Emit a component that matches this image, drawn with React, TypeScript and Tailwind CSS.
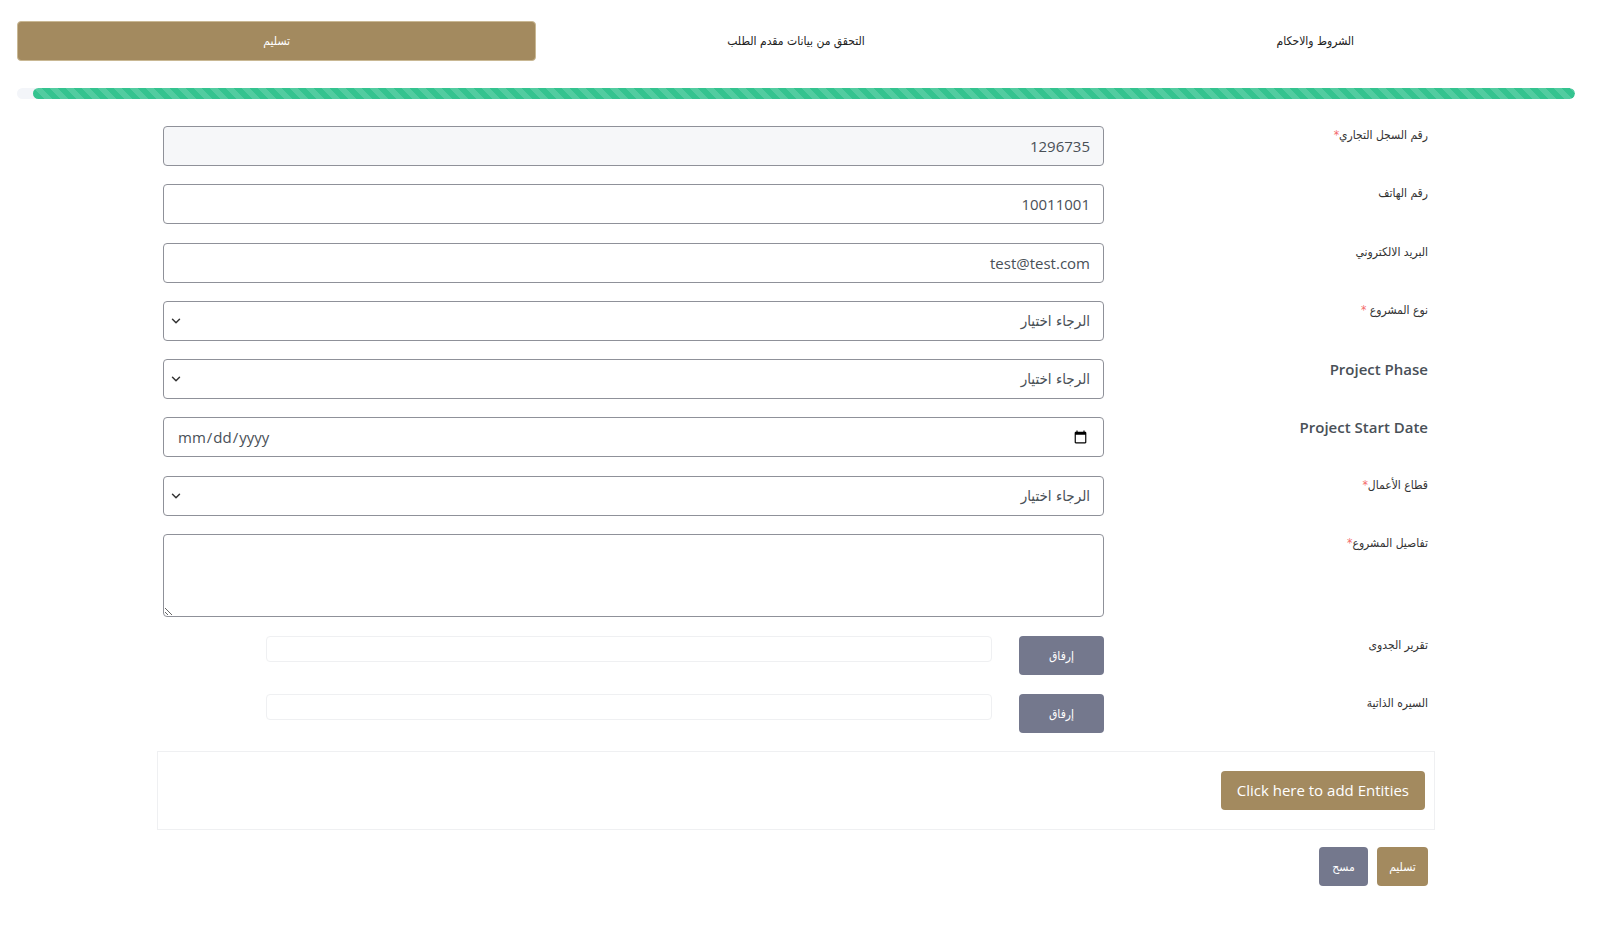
import React from 'react';
import { ChevronDown } from 'lucide-react';

const ar = "font-['DejaVu_Sans_Condensed','DejaVu_Sans','Liberation_Sans',sans-serif]";
const en = "font-['Open_Sans','Liberation_Sans',sans-serif]";

const inputBase =
  'h-10 w-full rounded-[4px] border border-[#8f9199] px-[13px] text-[15px] text-[#495057] outline-none';

const Label: React.FC<{ text: string; required?: boolean; english?: boolean }> = ({ text, required, english }) =>
  english ? (
    <div className={`${en} w-[331px] shrink-0 pr-[7px] text-[15px] font-semibold leading-5 text-[#495057]`}>{text}</div>
  ) : (
    <div className={`${ar} w-[331px] shrink-0 pr-[7px] text-[12px] leading-[18px] text-[#333]`}>
      {text}
      {required && <span className="text-[#f46a6a]">*</span>}
    </div>
  );

const Row: React.FC<{ label: React.ReactNode; children: React.ReactNode; className?: string }> = ({ label, children, className }) => (
  <div className={`flex pl-[6px] ${className ?? 'mb-[18.3px]'}`}>
    {label}
    <div className="flex-1">{children}</div>
  </div>
);

const Select = () => (
  <div className="relative">
    <select className={`${inputBase} ${ar} appearance-none bg-white text-[12px] text-[#333]`} defaultValue="">
      <option value="">الرجاء اختيار</option>
    </select>
    <ChevronDown size={14} strokeWidth={2.5} className="pointer-events-none absolute left-[6px] top-[13px] text-[#333]" />
  </div>
);

const Attach = () => (
  <div className="flex items-start gap-[27px]">
    <button className={`${ar} h-[39px] w-[85px] rounded-[4px] bg-[#74788d] text-[12px] text-white`}>إرفاق</button>
    <div className="h-[26px] w-[726px] rounded-[4px] border border-[#eff0f2] bg-white" />
  </div>
);

export default function App() {
  return (
    <div className="min-h-screen bg-white pl-[17px] pr-[25px] pt-[21px]">
      {/* steps */}
      <div dir="rtl" className={`${ar} grid h-10 grid-cols-3 text-[12px] text-[#222]`}>
        <div className="flex items-center justify-center">الشروط والاحكام</div>
        <div className="flex items-center justify-center">التحقق من بيانات مقدم الطلب</div>
        <div className="flex items-center justify-center rounded-[4px] border border-[#c9b894] bg-[#a38a5f] text-white">
          تسليم
        </div>
      </div>

      {/* progress */}
      <div dir="rtl" className="mt-[27px] h-[11px] w-full overflow-hidden rounded-full bg-[#f3f5f9]">
        <div className="h-full w-[99%] rounded-full bg-[#34c38f] bg-[linear-gradient(45deg,rgba(255,255,255,.15)_25%,transparent_25%,transparent_50%,rgba(255,255,255,.15)_50%,rgba(255,255,255,.15)_75%,transparent_75%,transparent)] bg-[length:1rem_1rem]" />
      </div>

      {/* form */}
      <div dir="rtl" className="mx-auto mt-[27px] w-[1278px]">
        <Row label={<Label text="رقم السجل التجاري" required />}>
          <input readOnly value="1296735" className={`${inputBase} ${en} bg-[#f6f7f9]`} />
        </Row>
        <Row label={<Label text="رقم الهاتف" />}>
          <input readOnly value="10011001" className={`${inputBase} ${en} bg-white`} />
        </Row>
        <Row label={<Label text="البريد الالكتروني" />}>
          <input readOnly value="test@test.com" className={`${inputBase} ${en} bg-white`} />
        </Row>
        <Row
          label={
            <div className={`${ar} w-[331px] shrink-0 pr-[7px] text-[12px] leading-[18px] text-[#333]`}>
              نوع المشروع <span className="text-[#f46a6a]">*</span>
            </div>
          }
        >
          <Select />
        </Row>
        <Row label={<Label text="Project Phase" english />}>
          <Select />
        </Row>
        <Row label={<Label text="Project Start Date" english />}>
          <input type="date" dir="ltr" className={`${inputBase} ${en} bg-white`} />
        </Row>
        <Row label={<Label text="قطاع الأعمال" required />}>
          <Select />
        </Row>
        <Row label={<Label text="تفاصيل المشروع" required />} className="mb-[19px]">
          <textarea className="block h-[83px] w-full rounded-[4px] border border-[#8f9199] bg-white outline-none" />
        </Row>
        <Row label={<Label text="تقرير الجدوى" />} className="mb-[19px]">
          <Attach />
        </Row>
        <Row label={<Label text="السيره الذاتية" />} className="mb-[18px]">
          <Attach />
        </Row>

        {/* entities */}
        <div className="border border-[#eff0f2] py-[19px] pr-[9px]">
          <button className={`${en} h-[39px] rounded-[4px] bg-[#a38a5f] px-[16px] text-[15px] font-medium text-white`}>
            Click here to add Entities
          </button>
        </div>

        {/* actions */}
        <div className="mt-[17px] flex gap-[9px] pr-[7px]">
          <button className={`${ar} h-[39px] w-[51px] rounded-[4px] bg-[#a38a5f] text-[12px] text-white`}>تسليم</button>
          <button className={`${ar} h-[39px] w-[49px] rounded-[4px] bg-[#74788d] text-[12px] text-white`}>مسح</button>
        </div>
      </div>
    </div>
  );
}
